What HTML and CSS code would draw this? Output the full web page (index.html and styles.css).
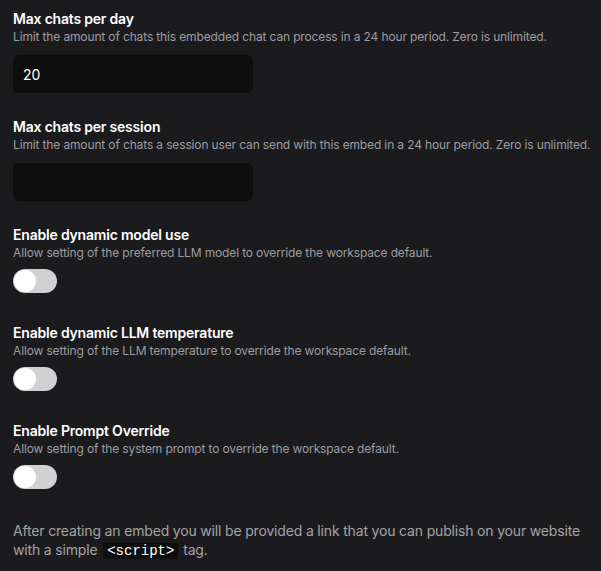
FILE: index.html
```html
<!DOCTYPE html>
<html lang="en">
<head>
  <meta charset="UTF-8">
  <title>Embed settings</title>
  <link rel="stylesheet" href="styles.css">
</head>
<body>
  <div class="field">
    <label class="field-title">Max chats per day</label>
    <p class="field-desc">Limit the amount of chats this embedded chat can process in a 24 hour period. Zero is unlimited.</p>
    <input class="num-input" type="text" value="20">
  </div>

  <div class="field">
    <label class="field-title">Max chats per session</label>
    <p class="field-desc">Limit the amount of chats a session user can send with this embed in a 24 hour period. Zero is unlimited.</p>
    <input class="num-input" type="text" value="">
  </div>

  <div class="field switch-field">
    <label class="field-title">Enable dynamic model use</label>
    <p class="field-desc">Allow setting of the preferred LLM model to override the workspace default.</p>
    <span class="toggle"><span class="knob"></span></span>
  </div>

  <div class="field switch-field">
    <label class="field-title">Enable dynamic LLM temperature</label>
    <p class="field-desc">Allow setting of the LLM temperature to override the workspace default.</p>
    <span class="toggle"><span class="knob"></span></span>
  </div>

  <div class="field switch-field">
    <label class="field-title">Enable Prompt Override</label>
    <p class="field-desc">Allow setting of the system prompt to override the workspace default.</p>
    <span class="toggle"><span class="knob"></span></span>
  </div>

  <p class="note">After creating an embed you will be provided a link that you can publish on your website with a simple <code>&lt;script&gt;</code> tag.</p>
</body>
</html>
```

FILE: styles.css
```css
html, body { background: #1b1b1e; }
body {
  margin: 0;
  padding: 9px 13px 0;
  font-family: 'Inter', 'Noto Sans', sans-serif;
  color: #fff;
}
.field { display: flex; flex-direction: column; align-items: flex-start; padding-bottom: 24px; }
.switch-field { padding-bottom: 30px; }
.field-title {
  font-size: 14px;
  line-height: 20px;
  font-weight: 600;
  letter-spacing: -0.2px;
}
.field-desc {
  margin: 0;
  font-size: 12px;
  line-height: 16px;
  color: #9d9da1;
  letter-spacing: -0.14px;
  white-space: nowrap;
}
.num-input {
  margin-top: 10px;
  box-sizing: border-box;
  width: 240px;
  height: 38px;
  padding: 0 10px;
  background: #0e0e0f;
  border: none;
  border-radius: 6px;
  color: #fff;
  font-family: inherit;
  font-size: 14px;
  outline: none;
}
.toggle {
  margin-top: 8px;
  width: 44px;
  height: 24px;
  border-radius: 12px;
  background: #d1d1d3;
  display: flex;
  align-items: center;
  padding: 0 1px;
  box-sizing: border-box;
}
.knob {
  width: 22px;
  height: 22px;
  border-radius: 50%;
  background: #fff;
}
.note {
  margin: 2px 0 0;
  font-size: 14px;
  line-height: 19px;
  color: #a3a3a7;
  letter-spacing: -0.17px;
}
.note code {
  font-family: 'Liberation Mono', 'DejaVu Sans Mono', monospace;
  font-size: 14px;
  line-height: 16px;
  background: #0e0e0f;
  color: #fff;
  padding: 0 4px;
  margin: 0 1px 0 2px;
  letter-spacing: 0;
}
```
